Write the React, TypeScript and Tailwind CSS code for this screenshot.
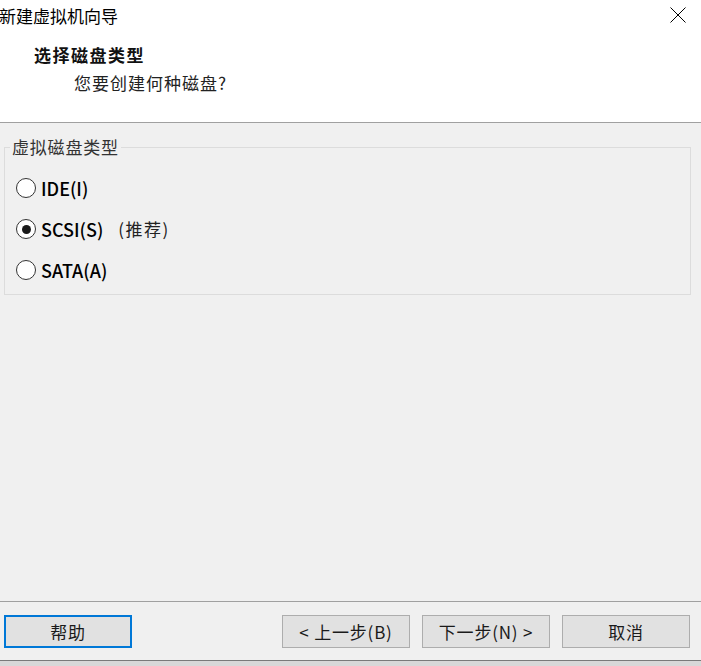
const cjk = "font-['Noto_Sans_CJK_SC','Noto_Sans',sans-serif]";

function Radio({ checked }: { checked?: boolean }) {
  return (
    <span className="flex h-[20px] w-[20px] items-center justify-center rounded-full border border-[#333] bg-white">
      {checked && <span className="h-[9px] w-[9px] rounded-full bg-[#1a1a1a]" />}
    </span>
  );
}

function Btn({ label, focused }: { label: string; focused?: boolean }) {
  return (
    <button
      className={
        "flex h-[33px] w-[128px] items-center justify-center bg-[#e1e1e1] text-[17px] tracking-[0.8px] text-[#1a1a1a] " +
        (focused ? "border-2 border-[#0078d7]" : "border border-[#adadad]")
      }
    >
      {label}
    </button>
  );
}

export default function App() {
  return (
    <div className={`flex h-[666px] w-[701px] flex-col overflow-hidden bg-[#f0f0f0] text-black ${cjk}`}>
      {/* Header */}
      <div className="h-[123px] shrink-0 border-b border-[#a0a0a0] bg-white">
        <div className="flex h-[31px] items-center justify-between">
          <span className="-ml-[1px] text-[17px] leading-none">新建虚拟机向导</span>
          <svg width="16" height="16" viewBox="0 0 16 16" className="mr-[15px] mt-[-1px]">
            <path d="M0.5 0.5 L15.5 15.5 M15.5 0.5 L0.5 15.5" stroke="#000" strokeWidth="1" fill="none" />
          </svg>
        </div>
        <div className="pl-[34px] pt-[13px] text-[17px] font-bold leading-[22px] tracking-[1.5px] text-[#111]">
          选择磁盘类型
        </div>
        <div className="pl-[74px] pt-[6px] text-[17px] leading-[22px] tracking-[1px] text-[#222]">
          您要创建何种磁盘?
        </div>
      </div>

      {/* Body */}
      <div className="flex-1 px-[4px] pt-[14px]">
        <fieldset className="h-[158px] w-[687px] border border-[#dcdcdc]">
          <legend className="ml-[5px] px-[2px] text-[17px] leading-[20px] tracking-[0.8px] text-[#333]">虚拟磁盘类型</legend>
          <div className="flex flex-col gap-[21px] pl-[11px] pt-[21px]">
            <label className="flex h-[20px] items-center gap-[5px] text-[18px] font-medium">
              <Radio />
              <span>IDE(I)</span>
            </label>
            <label className="flex h-[20px] items-center gap-[5px] text-[18px] font-medium">
              <Radio checked />
              <span>SCSI(S)</span>
              <span className="ml-[10px] text-[17px] font-normal tracking-[1.5px] text-[#222]">(推荐)</span>
            </label>
            <label className="flex h-[20px] items-center gap-[5px] text-[18px] font-medium">
              <Radio />
              <span>SATA(A)</span>
            </label>
          </div>
        </fieldset>
      </div>

      {/* Footer */}
      <div className="h-[60px] shrink-0 border-t border-b border-t-[#a0a0a0] border-b-[#7a7a7a] px-[4px] pt-[13px]">
        <div className="flex items-center">
          <Btn label="帮助" focused />
          <div className="ml-auto mr-[7px] flex gap-[12px]">
            <Btn label="< 上一步(B)" />
            <Btn label="下一步(N) >" />
            <Btn label="取消" />
          </div>
        </div>
      </div>
      <div className="h-[5px] shrink-0 bg-[#d8d8d8]" />
    </div>
  );
}
